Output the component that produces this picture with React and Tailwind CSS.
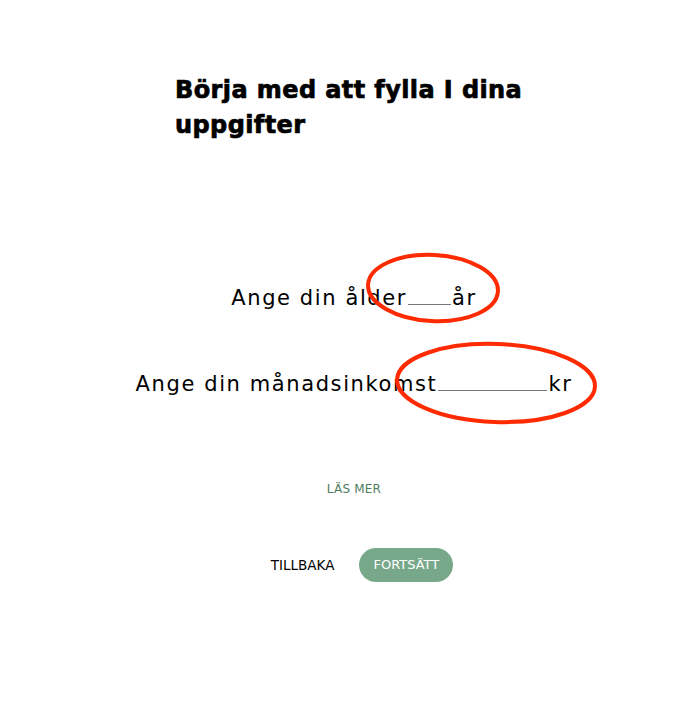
import React from "react";

const body = { fontFamily: '"DejaVu Sans", "Open Sans", sans-serif' };

export default function App() {
  return (
    <div className="relative min-h-[710px] w-full bg-white text-black" style={body}>
      <div className="flex flex-col items-center">
        <h1 className="mt-[73px] w-[350px] text-[24px] font-black leading-[35px] tracking-[0.4px] [-webkit-text-stroke:0.7px_black]">
          Börja med att fylla I dina uppgifter
        </h1>

        <div className="mt-[143px] flex flex-col items-center gap-[62px] pl-[8px] text-[21px] tracking-[1.6px]">
          <p className="leading-[24px]">
            Ange din ålder
            <span className="mx-[1px] inline-block w-[43px] border-b border-[#777]" />
            år
          </p>
          <p className="leading-[24px]">
            Ange din månadsinkomst
            <span className="mx-[1px] inline-block w-[109px] border-b border-[#777]" />
            kr
          </p>
        </div>

        <a className="mt-[84px] pl-[8px] text-[12px] uppercase tracking-[0.2px] text-[#4f7d5e]">LÄS MER</a>

        <div className="mt-[50px] flex items-center gap-[25px] pl-[24px]">
          <button className="text-[13.5px] text-black">TILLBAKA</button>
          <button className="h-[34px] rounded-full bg-[#78a88a] px-[14px] text-[13px] text-white">FORTSÄTT</button>
        </div>
      </div>

      <svg className="pointer-events-none absolute left-0 top-0" width="700" height="710">
        <ellipse cx="433" cy="288" rx="65" ry="33" fill="none" stroke="#ff2a00" strokeWidth="4" transform="rotate(3 433 288)" />
        <ellipse cx="496" cy="383" rx="99" ry="39" fill="none" stroke="#ff2a00" strokeWidth="4" transform="rotate(2 496 383)" />
      </svg>
    </div>
  );
}
